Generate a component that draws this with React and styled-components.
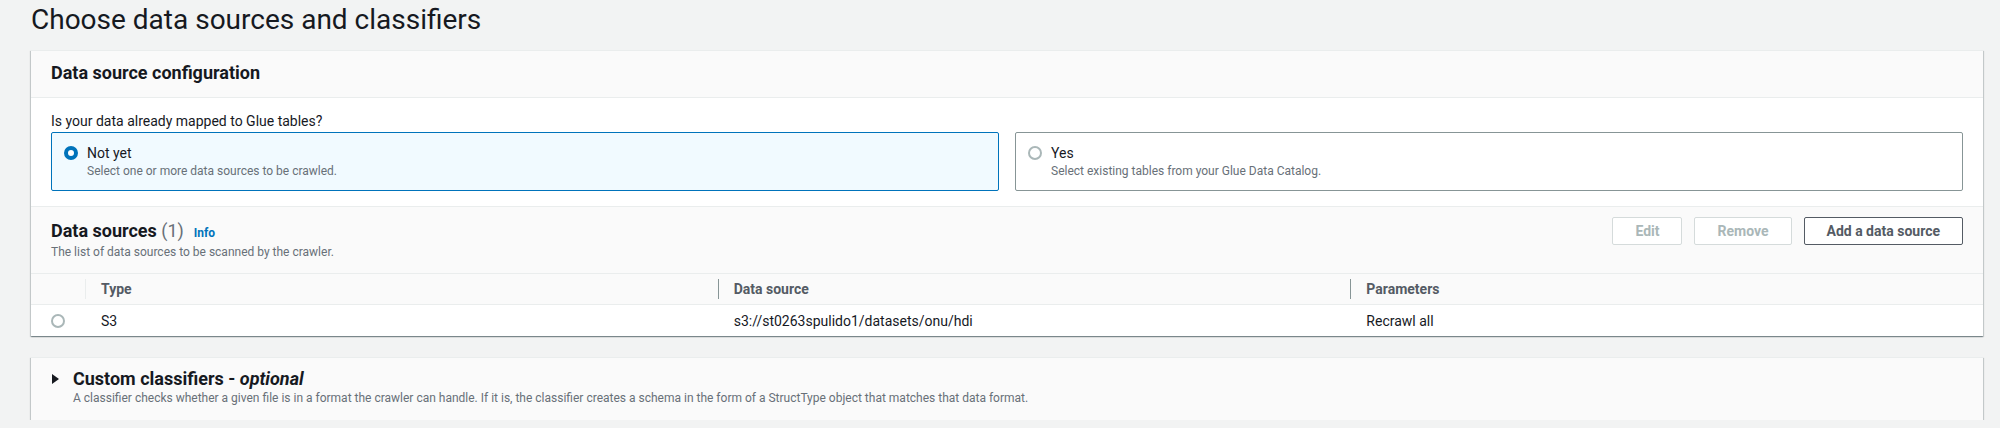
import React from 'react';
import styled, { createGlobalStyle } from 'styled-components';

const GlobalStyle = createGlobalStyle`
  html, body { margin: 0; padding: 0; background: #f2f3f3; }
  body {
    font-family: Roboto, "Liberation Sans", Arial, sans-serif;
    color: #16191f;
    -webkit-font-smoothing: antialiased;
  }
  * { box-sizing: border-box; }
`;

const Page = styled.div`
  padding: 2px 17px 0 31px;
  display: flex;
  flex-direction: column;
`;

const PageTitle = styled.h1`
  margin: 0 0 12px;
  font-size: 28px;
  line-height: 36px;
  font-weight: 400;
  color: #16191f;
`;

const Card = styled.section`
  background: ${p => (p.$muted ? '#fafafa' : '#ffffff')};
  border-top: 1px solid #eaeded;
  box-shadow: 0 1px 1px 0 rgba(0, 28, 36, 0.3), 1px 1px 1px 0 rgba(0, 28, 36, 0.15),
    -1px 1px 1px 0 rgba(0, 28, 36, 0.15);
  margin-top: ${p => p.$mt || 0}px;
`;

const CardHeader = styled.div`
  background: #fafafa;
  padding: 11px 20px 13px;
  border-bottom: 1px solid #eaeded;
`;

const Heading = styled.h2`
  margin: 0;
  font-size: 18px;
  line-height: 22px;
  font-weight: 700;
  color: #16191f;
`;

const Counter = styled.span`
  font-weight: 400;
  color: #687078;
`;

const InfoLink = styled.a`
  margin-left: 10px;
  font-size: 12px;
  font-weight: 700;
  color: #0073bb;
  text-decoration: none;
`;

const CardBody = styled.div`
  padding: 13px 20px 15px;
  border-bottom: 1px solid #eaeded;
`;

const FieldLabel = styled.div`
  font-size: 14px;
  line-height: 20px;
  margin-bottom: 1px;
  color: #16191f;
`;

const TileGroup = styled.div`
  display: grid;
  grid-template-columns: 1fr 1fr;
  gap: 16px;
`;

const Tile = styled.label`
  display: grid;
  grid-template-columns: 14px 1fr;
  column-gap: 9px;
  align-items: center;
  padding: 10px 12px 11px;
  border: 1px solid ${p => (p.$selected ? '#0073bb' : '#879596')};
  border-radius: 2px;
  background: ${p => (p.$selected ? '#f1faff' : '#ffffff')};
  cursor: pointer;
`;

const Radio = styled.span`
  display: block;
  width: 14px;
  height: 14px;
  border-radius: 50%;
  background: #fff;
  border: ${p => (p.$checked ? '4px solid #0073bb' : '2px solid #aab7b8')};
`;

const TileLabel = styled.span`
  font-size: 14px;
  line-height: 20px;
  color: #16191f;
`;

const Hint = styled.span`
  grid-column: 2;
  font-size: 12px;
  line-height: 16px;
  color: #687078;
`;

const SectionHeader = styled.div`
  background: #fafafa;
  padding: 10px 20px 13px;
  display: flex;
  justify-content: space-between;
  align-items: flex-start;
`;

const SectionTitleBlock = styled.div`
  padding-top: 3px;
  display: flex;
  flex-direction: column;
`;

const Description = styled.div`
  font-size: 12px;
  line-height: 16px;
  color: #687078;
`;

const Actions = styled.div`
  display: flex;
  gap: 12px;
`;

const Button = styled.button`
  height: 28px;
  padding: 0 22px;
  border-radius: 2px;
  background: #ffffff;
  font-family: inherit;
  font-size: 14px;
  line-height: 20px;
  font-weight: 700;
  border: 1px solid ${p => (p.disabled ? '#d5dbdb' : '#545b64')};
  color: ${p => (p.disabled ? '#aab7b8' : '#545b64')};
  cursor: ${p => (p.disabled ? 'default' : 'pointer')};
`;

const Table = styled.div`
  display: grid;
  grid-template-columns: 54px 1fr 1fr 1fr;
`;

const HeadCell = styled.div`
  position: relative;
  height: 32px;
  display: flex;
  align-items: center;
  padding-left: 16px;
  background: #fafafa;
  border-top: 1px solid #eaeded;
  border-bottom: 1px solid #eaeded;
  font-size: 14px;
  line-height: 20px;
  font-weight: 700;
  color: #545b64;
  &::before {
    content: '';
    display: ${p => (p.$divider ? 'block' : 'none')};
    position: absolute;
    left: 0;
    top: 5px;
    bottom: 5px;
    width: 1px;
    background: ${p => p.$divider || 'transparent'};
  }
`;

const Cell = styled.div`
  height: 31px;
  display: flex;
  align-items: center;
  justify-content: ${p => (p.$center ? 'center' : 'flex-start')};
  padding-left: ${p => (p.$center ? 0 : 16)}px;
  font-size: 14px;
  line-height: 20px;
  color: #16191f;
`;

const ExpandRow = styled.div`
  display: flex;
  align-items: flex-start;
  padding: 10px 20px 14px;
`;

const Caret = styled.svg`
  flex: none;
  width: 22px;
  height: 22px;
  color: #16191f;
`;

const ExpandText = styled.div`
  display: flex;
  flex-direction: column;
`;

const Optional = styled.i`
  font-style: italic;
`;

export default function App() {
  return (
    <>
      <GlobalStyle />
      <Page>
        <PageTitle>Choose data sources and classifiers</PageTitle>

        <Card>
          <CardHeader>
            <Heading>Data source configuration</Heading>
          </CardHeader>
          <CardBody>
            <FieldLabel>Is your data already mapped to Glue tables?</FieldLabel>
            <TileGroup>
              <Tile $selected>
                <Radio $checked />
                <TileLabel>Not yet</TileLabel>
                <Hint>Select one or more data sources to be crawled.</Hint>
              </Tile>
              <Tile>
                <Radio />
                <TileLabel>Yes</TileLabel>
                <Hint>Select existing tables from your Glue Data Catalog.</Hint>
              </Tile>
            </TileGroup>
          </CardBody>

          <SectionHeader>
            <SectionTitleBlock>
              <Heading>
                Data sources <Counter>(1)</Counter>
                <InfoLink href="#">Info</InfoLink>
              </Heading>
              <Description>The list of data sources to be scanned by the crawler.</Description>
            </SectionTitleBlock>
            <Actions>
              <Button disabled>Edit</Button>
              <Button disabled>Remove</Button>
              <Button>Add a data source</Button>
            </Actions>
          </SectionHeader>

          <Table>
            <HeadCell />
            <HeadCell $divider="#eaeded">Type</HeadCell>
            <HeadCell $divider="#879596">Data source</HeadCell>
            <HeadCell $divider="#879596">Parameters</HeadCell>
            <Cell $center>
              <Radio />
            </Cell>
            <Cell>S3</Cell>
            <Cell>s3://st0263spulido1/datasets/onu/hdi</Cell>
            <Cell>Recrawl all</Cell>
          </Table>
        </Card>

        <Card $muted $mt={21}>
          <ExpandRow>
            <Caret viewBox="0 0 22 22">
              <polygon points="1,6 8,11 1,16" fill="currentColor" />
            </Caret>
            <ExpandText>
              <Heading>
                Custom classifiers - <Optional>optional</Optional>
              </Heading>
              <Description>
                A classifier checks whether a given file is in a format the crawler can handle. If it is, the
                classifier creates a schema in the form of a StructType object that matches that data format.
              </Description>
            </ExpandText>
          </ExpandRow>
        </Card>
      </Page>
    </>
  );
}
